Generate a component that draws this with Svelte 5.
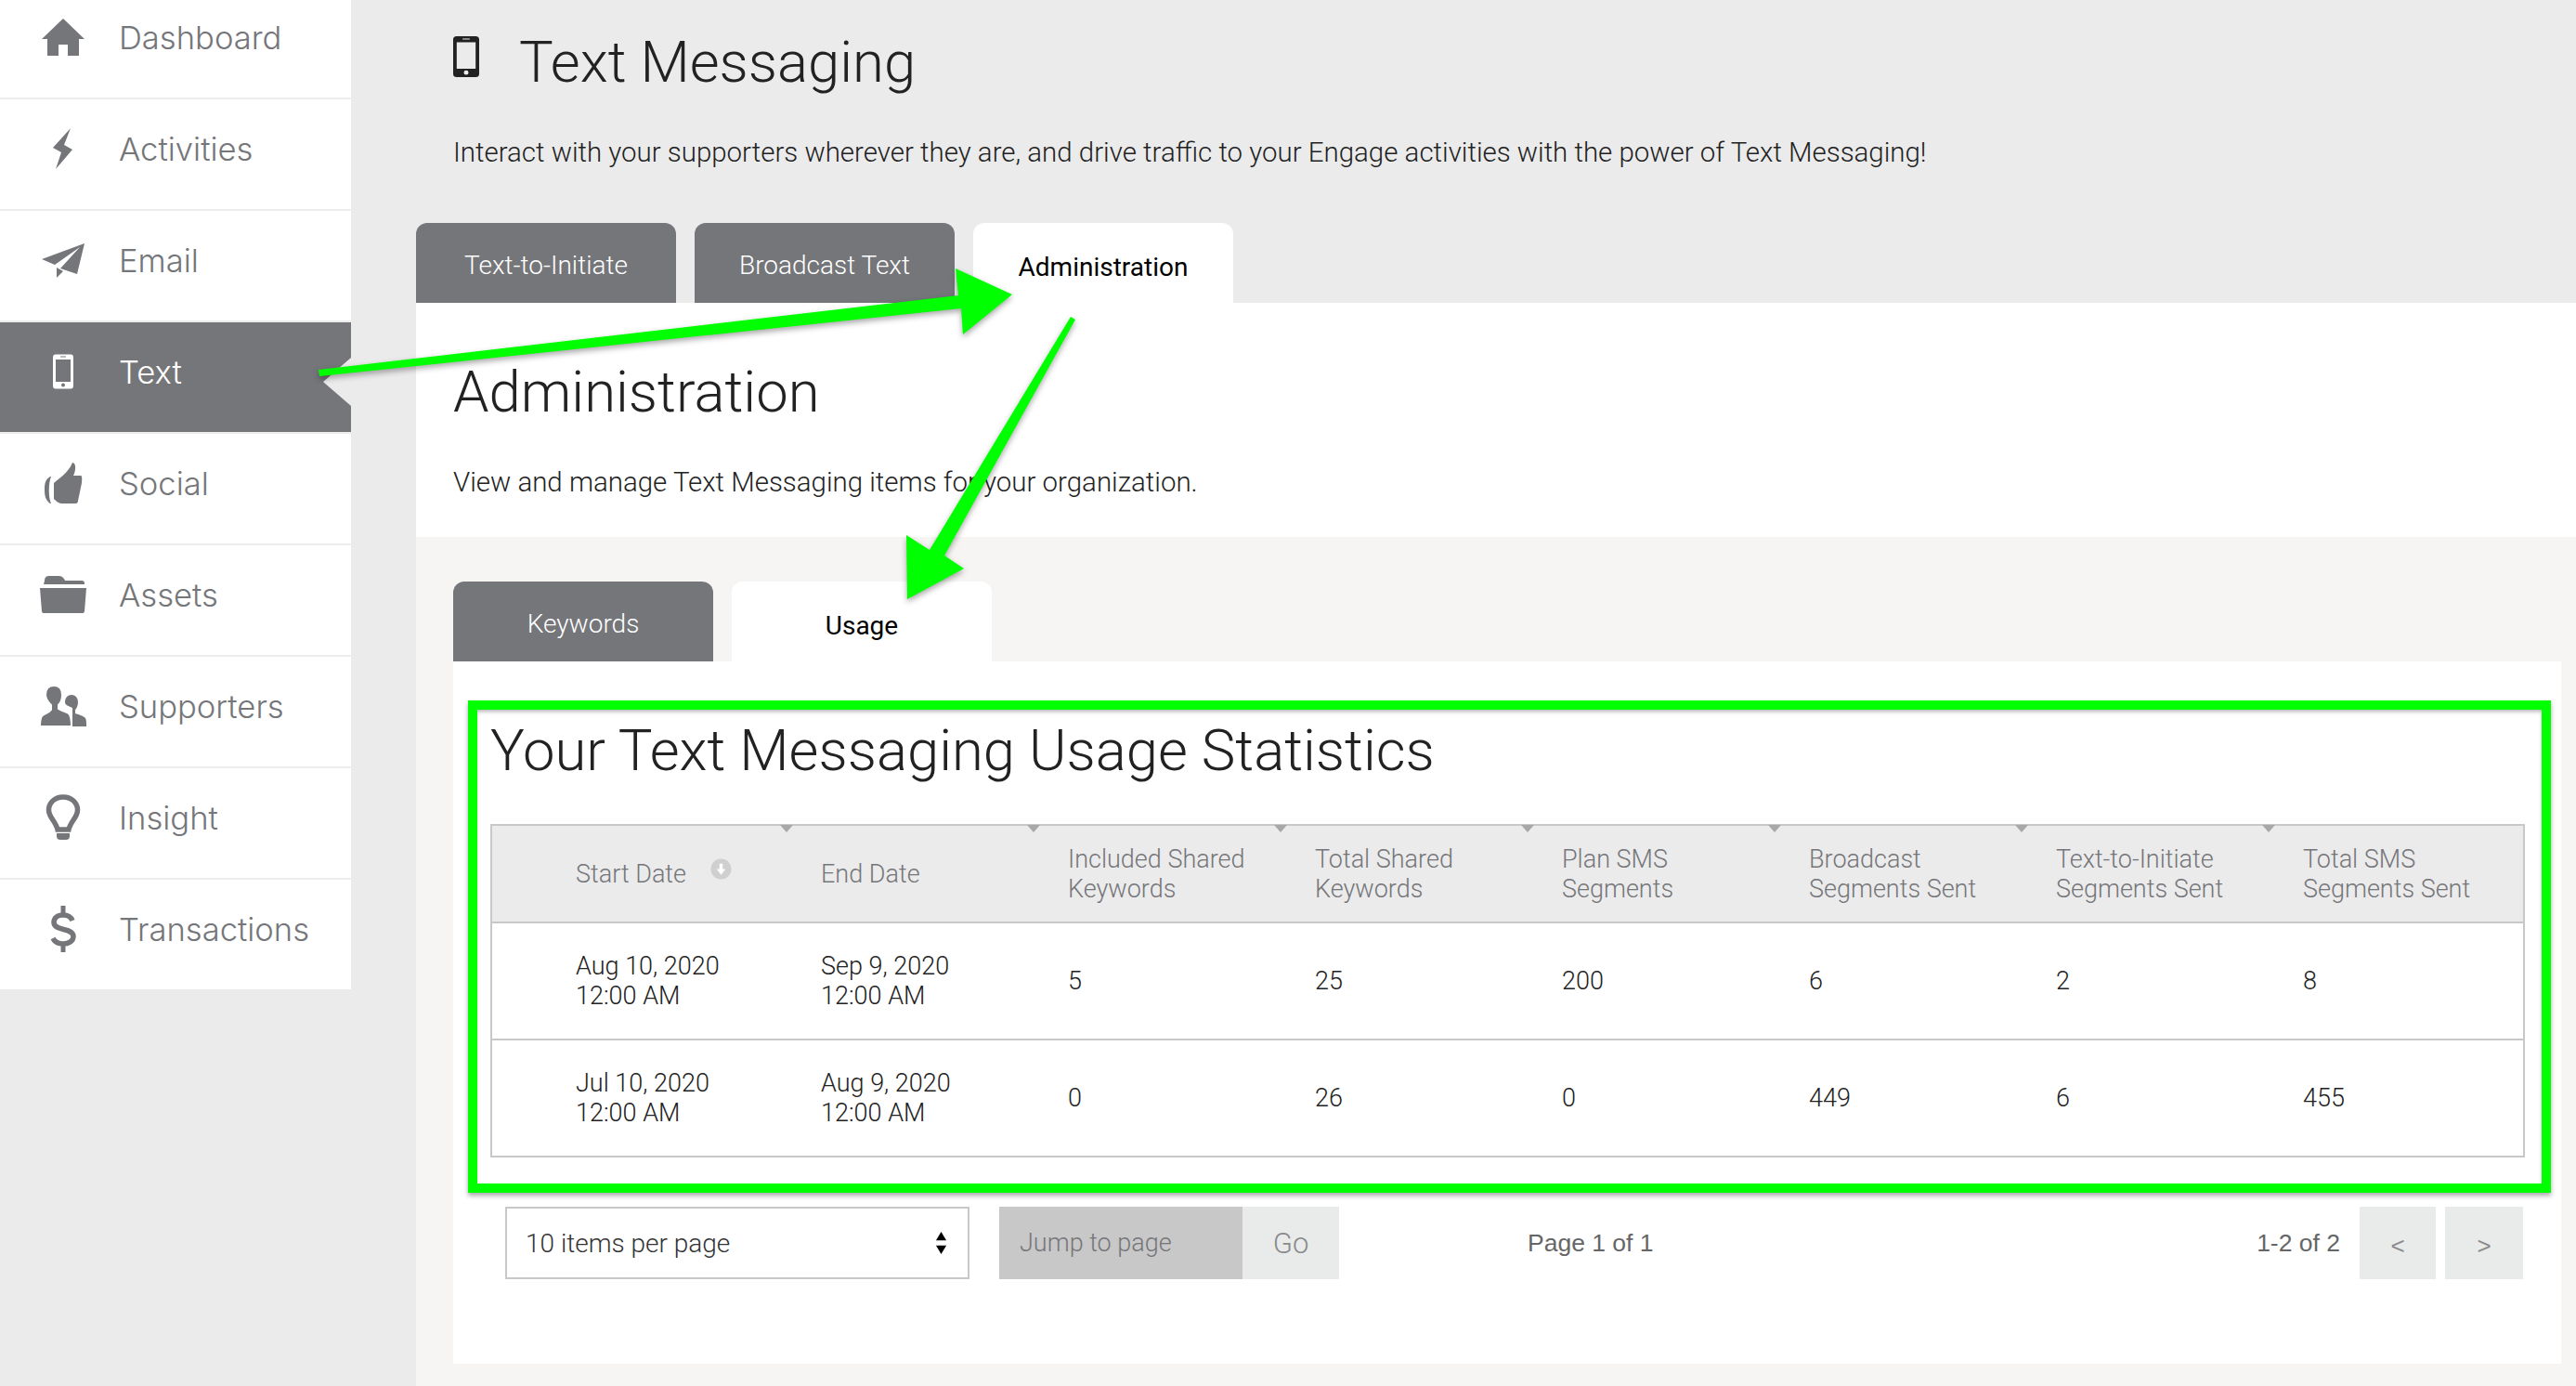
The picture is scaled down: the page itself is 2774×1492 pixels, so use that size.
<script>
  const phone =
    "M20 9.5h16a3 3 0 0 1 3 3v31a3 3 0 0 1-3 3H20a3 3 0 0 1-3-3v-31a3 3 0 0 1 3-3z M20 15v24h16V15z M28 40.5a2 2 0 1 0 0 4 2 2 0 0 0 0-4z M25 11.5v1h6v-1z";

  const nav = [
    { label: "Dashboard", paths: ["M28 8 L51 30 H45 V48 H33 V36 H23 V48 H11 V30 H5 Z"] },
    { label: "Activities", paths: ["M36 6 L17 27 L26 32 L20 50 L38 29 L29 24 Z"] },
    { label: "Email", paths: ["M51 10 L5 27 L19 33 L46 14 L25 37 L43 43 Z", "M21 36 L21 47 L28 40 Z"] },
    { label: "Text", paths: [phone], active: true },
    {
      label: "Social",
      paths: [
        "M14 21 C9 24 8 28 8 35 C8 42 9 46 14 50 L15 50 C12 44 12 28 15 21 Z",
        "M18 28 C24 22 33 18 38 6 C42 6 42 14 39 20 H47 C49 20 48 26 48 28 L44 47 C44 50 42 50 40 50 H26 C23 50 19 46 18 45 Z",
      ],
    },
    {
      label: "Assets",
      paths: [
        "M8 13 q0-5 5-5 h11 q3 0 5 3 l1 2 h18 q3 0 3 3 v1 H7z",
        "M3 21 H53 L51 46 q0 2-2 2 H7 q-2 0-2-2 z",
      ],
    },
    {
      label: "Supporters",
      paths: [
        "M37 16c4 0 7 3 7 8 0 4-2 7-3 8v4c4 1 9 3 11 5 1 2 1 5 1 9H38V30c-4-2-8-3-8-6 0-5 3-8 7-8z",
        "M18 6c6 0 9 4 9 10 0 5-2 9-4 11v4c3 2 8 3 11 5 2 2 3 8 3 14H3c0-6 0-10 3-12 3-2 7-3 9-6v-5C13 25 9 21 9 16 9 10 12 6 18 6z",
      ],
      outlined: true,
    },
    {
      label: "Insight",
      paths: ["M21 45h14v3q0 4-4 4h-6q-4 0-4-4z"],
      stroke: "M28 6 C18 6 12.5 13 12.5 20 C12.5 28 20 32 22 41 H34 C36 32 43.5 28 43.5 20 C43.5 13 38 6 28 6z",
    },
    {
      label: "Transactions",
      paths: ["M25.5 3h5v10h-5z", "M25.5 44h5v9h-5z"],
      stroke: "M38 19 C36 14 32 13 28 13 C22 13 18 16 18 21 C18 31 39 26 39 36 C39 41 34 44 28 44 C23 44 19 42 17 38",
    },
  ];

  const columns = [
    ["Start Date"],
    ["End Date"],
    ["Included Shared", "Keywords"],
    ["Total Shared", "Keywords"],
    ["Plan SMS", "Segments"],
    ["Broadcast", "Segments Sent"],
    ["Text-to-Initiate", "Segments Sent"],
    ["Total SMS", "Segments Sent"],
  ];

  const rows = [
    [["Aug 10, 2020", "12:00 AM"], ["Sep 9, 2020", "12:00 AM"], ["5"], ["25"], ["200"], ["6"], ["2"], ["8"]],
    [["Jul 10, 2020", "12:00 AM"], ["Aug 9, 2020", "12:00 AM"], ["0"], ["26"], ["0"], ["449"], ["6"], ["455"]],
  ];
</script>

<div class="page">
  <nav class="sidebar">
    {#each nav as item}
      <div class="nav-item" class:active={item.active}>
        <svg class="nav-icon" viewBox="0 0 56 56" width="56" height="56">
          {#if item.stroke}<path class="line" d={item.stroke} />{/if}
          {#each item.paths as d, i}
            <path {d} fill-rule="evenodd" class:outlined={item.outlined && i === 1} />
          {/each}
        </svg>
        <span>{item.label}</span>
      </div>
    {/each}
  </nav>

  <main class="main">
    <header class="head">
      <div class="title-row">
        <svg class="head-icon" viewBox="17 9.5 22 37" width="28" height="44" preserveAspectRatio="none">
          <path d={phone} fill-rule="evenodd" />
        </svg>
        <h1>Text Messaging</h1>
      </div>
      <p>Interact with your supporters wherever they are, and drive traffic to your Engage activities with the power of Text Messaging!</p>
    </header>

    <div class="tabs top-tabs">
      <div class="tab">Text-to-Initiate</div>
      <div class="tab">Broadcast Text</div>
      <div class="tab selected">Administration</div>
    </div>

    <section class="panel">
      <h2>Administration</h2>
      <p>View and manage Text Messaging items for your organization.</p>
    </section>

    <section class="sub">
      <div class="tabs">
        <div class="tab">Keywords</div>
        <div class="tab selected">Usage</div>
      </div>
      <div class="card">
        <h2>Your Text Messaging Usage Statistics</h2>
        <table>
          <colgroup>
            <col class="first" />
            {#each columns.slice(1, -1) as _}<col />{/each}
            <col class="last" />
          </colgroup>
          <thead>
            <tr>
              {#each columns as lines, i}
                <th>
                  {#each lines as line}<div>{line}</div>{/each}
                  {#if i === 0}
                    <svg class="sort" viewBox="0 0 24 24" width="23" height="23">
                      <circle cx="12" cy="12" r="11.5" fill="#cfcfcf" />
                      <path d="M10.2 6h3.6v6h3.2L12 18.5 7 12h3.2z" fill="#fff" />
                    </svg>
                  {/if}
                  {#if i < columns.length - 1}<span class="handle"></span>{/if}
                </th>
              {/each}
            </tr>
          </thead>
          <tbody>
            {#each rows as row}
              <tr>
                {#each row as cell}
                  <td>{#each cell as line}<div>{line}</div>{/each}</td>
                {/each}
              </tr>
            {/each}
          </tbody>
        </table>

        <div class="pager">
          <div class="select">
            <span>10 items per page</span>
            <svg viewBox="0 0 14 28" width="13" height="26">
              <path d="M7 1 L13 11 H1 Z M1 17 H13 L7 27 Z" />
            </svg>
          </div>
          <div class="jump">
            <div class="jump-input">Jump to page</div>
            <div class="go">Go</div>
          </div>
          <div class="page-of">Page 1 of 1</div>
          <div class="count">1-2 of 2</div>
          <div class="arrow prev">&lt;</div>
          <div class="arrow next">&gt;</div>
        </div>
      </div>
    </section>
  </main>

  <!-- annotations drawn over the screenshot -->
  <div class="highlight"></div>
  <svg class="arrows" viewBox="0 0 2774 1492" width="2774" height="1492">
    <path d="M343 398 L1032 318 L1029 289 L1090 317 L1037 360 L1035 332 L344 405 Z" />
    <path d="M1153 341 L1158 344 L1017 598 L1038 612 L977 645 L976 576 L1001 592 Z" />
  </svg>
</div>

<style>
  :global(body) {
    margin: 0;
    background: #ebebeb;
  }
  .page {
    position: relative;
    display: flex;
    width: 2774px;
    height: 1492px;
    overflow: hidden;
    background: #ebebeb;
    font-family: Roboto, "Liberation Sans", sans-serif;
    font-weight: 300;
    color: #222;
  }

  .sidebar {
    flex: none;
    align-self: flex-start;
    width: 378px;
    margin-top: -13px;
    background: #fff;
  }
  .nav-item {
    position: relative;
    display: flex;
    align-items: center;
    box-sizing: border-box;
    height: 120px;
    padding: 0 0 12px 40px;
    border-bottom: 2px solid #ececec;
    font-family: Inter, sans-serif;
    font-size: 34.6px;
    color: #75767a;
  }
  .nav-item:last-child {
    border-bottom: 0;
    height: 118px;
  }
  .nav-item span {
    margin-left: 32px;
  }
  .nav-icon {
    flex: none;
    fill: #75767a;
  }
  .nav-icon .line {
    fill: none;
    stroke: #75767a;
    stroke-width: 5.5;
  }
  .nav-icon .outlined {
    stroke: #fff;
    stroke-width: 2;
  }
  .nav-item.active {
    background: #75767a;
    color: #fff;
  }
  .nav-item.active .nav-icon {
    fill: #fff;
  }
  .nav-item.active::after {
    content: "";
    position: absolute;
    right: 0;
    top: 38px;
    border-top: 26px solid transparent;
    border-bottom: 26px solid transparent;
    border-right: 30px solid #ebebeb;
  }

  .main {
    flex: 1;
    min-width: 0;
    margin-left: 70px;
    display: flex;
    flex-direction: column;
  }
  .head {
    padding: 31px 0 0 40px;
  }
  .title-row {
    display: flex;
    align-items: center;
    gap: 43px;
    height: 72px;
  }
  .head-icon {
    flex: none;
    fill: #222;
    margin-top: -12px;
  }
  h1,
  h2 {
    margin: 0;
    font-size: 61.6px;
    font-weight: 300;
    line-height: 72px;
    color: #222;
  }
  p {
    margin: 0;
    font-size: 29.45px;
    line-height: 40px;
  }
  .head p {
    margin-top: 41px;
  }

  .tabs {
    display: flex;
    gap: 20px;
  }
  .top-tabs {
    margin-top: 56px;
  }
  .tab {
    box-sizing: border-box;
    width: 280px;
    height: 86px;
    padding-top: 5px;
    display: flex;
    align-items: center;
    justify-content: center;
    border-radius: 12px 12px 0 0;
    background: #75767a;
    color: #fff;
    font-size: 28px;
  }
  .tab.selected {
    padding-top: 9px;
    background: #fff;
    color: #000;
    font-weight: 400;
  }

  .panel {
    box-sizing: border-box;
    height: 252px;
    padding: 60px 0 0 40px;
    background: #fff;
  }
  .panel p {
    margin-top: 41px;
  }

  .sub {
    flex: 1;
    padding: 48px 16px 24px 40px;
    background: #f6f5f3;
  }
  .card {
    box-sizing: border-box;
    height: 756px;
    padding: 60px 41px 0 40px;
    background: #fff;
  }

  table {
    width: 100%;
    margin-top: 43px;
    border-collapse: collapse;
    table-layout: fixed;
    border: 2px solid #c8c8c8;
    font-size: 27px;
    line-height: 32px;
  }
  col {
    width: 266px;
  }
  col.first {
    width: 318px;
  }
  col.last {
    width: 275px;
  }
  th {
    position: relative;
    height: 103px;
    padding: 0 0 0 37px;
    background: #ebebeb;
    border-bottom: 2px solid #c8c8c8;
    color: #75767a;
    font-weight: 300;
    text-align: left;
  }
  th:first-child,
  td:first-child {
    padding-left: 90px;
  }
  td {
    height: 124px;
    padding: 0 0 0 37px;
    border-bottom: 2px solid #c8c8c8;
    color: #222;
  }
  .handle {
    position: absolute;
    z-index: 1;
    top: -1px;
    right: -7px;
    border-left: 7px solid transparent;
    border-right: 7px solid transparent;
    border-top: 8px solid #a8a8a8;
  }
  .sort {
    position: absolute;
    top: 35px;
    left: 235px;
  }

  .pager {
    display: flex;
    align-items: stretch;
    height: 78px;
    margin-top: 53px;
    padding-left: 16px;
  }
  .select {
    box-sizing: border-box;
    width: 500px;
    display: flex;
    align-items: center;
    justify-content: space-between;
    padding: 0 22px 0 20px;
    border: 2px solid #c8c8c8;
    font-size: 28px;
    color: #333;
  }
  .select svg {
    fill: #000;
  }
  .jump {
    display: flex;
    margin-left: 32px;
    font-size: 27px;
    color: #75767a;
  }
  .jump-input {
    box-sizing: border-box;
    width: 262px;
    padding-left: 22px;
    display: flex;
    align-items: center;
    background: #c8c8c8;
  }
  .go {
    box-sizing: border-box;
    width: 104px;
    display: flex;
    align-items: center;
    justify-content: center;
    background: #e9ebea;
    font-size: 31px;
    color: #8a8a8a;
  }
  .page-of {
    flex: 1;
    display: flex;
    align-items: center;
    padding-left: 203px;
    font-family: "Liberation Sans", sans-serif;
    font-weight: 400;
    font-size: 26.5px;
    color: #666;
  }
  .count {
    display: flex;
    align-items: center;
    margin-right: 21px;
    font-family: "Liberation Sans", sans-serif;
    font-weight: 400;
    font-size: 26.5px;
    color: #666;
  }
  .arrow {
    display: flex;
    align-items: center;
    justify-content: center;
    padding-top: 6px;
    box-sizing: border-box;
    background: #e9ebea;
    font-family: "Liberation Sans", sans-serif;
    font-weight: 400;
    font-size: 26px;
    color: #8a8a8a;
  }
  .prev {
    width: 82px;
  }
  .next {
    width: 84px;
    margin-left: 10px;
  }

  .highlight {
    position: absolute;
    left: 504px;
    top: 754px;
    width: 2243px;
    height: 530px;
    box-sizing: border-box;
    border: 10px solid #00ff00;
    box-shadow: 0 3px 5px rgba(0, 0, 0, 0.35), inset 0 3px 4px -1px rgba(0, 0, 0, 0.3);
  }
  .arrows {
    position: absolute;
    left: 0;
    top: 0;
    fill: #00ff00;
    filter: drop-shadow(0 3px 3px rgba(0, 0, 0, 0.35));
  }
</style>
